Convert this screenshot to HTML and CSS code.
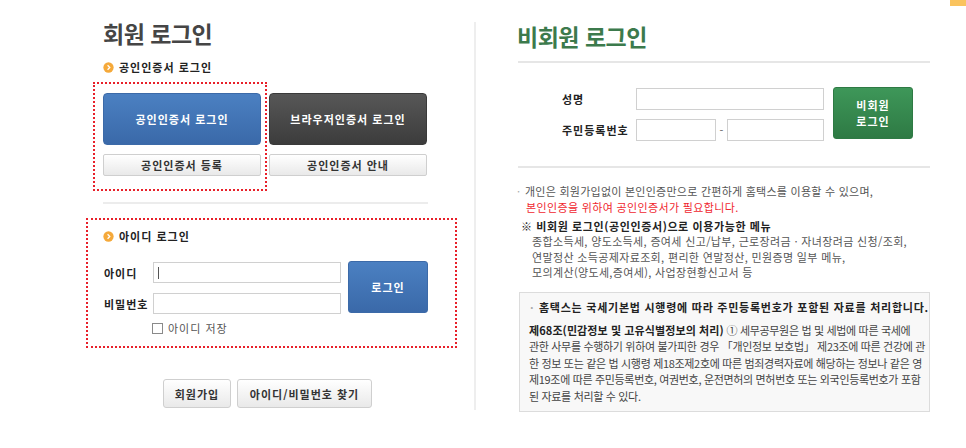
FILE: index.html
```html
<!DOCTYPE html>
<html lang="ko">
<head>
<meta charset="utf-8">
<title>로그인</title>
<link rel="stylesheet" href="styles.css">
</head>
<body>
<div class="corner"></div>
<div class="page">
  <section class="left">
    <h1 class="title">회원 로그인</h1>
    <h2 class="sub"><svg class="ico" viewBox="0 0 12 12" width="11" height="11"><circle cx="6" cy="6" r="5.6" fill="#f5a93a"/><path d="M5 3.6 L7.4 6 L5 8.4" stroke="#fff" stroke-width="1.4" fill="none"/></svg>공인인증서 로그인</h2>
    <div class="certRow">
      <div class="certBox">
        <button class="bigBtn blue">공인인증서 로그인</button>
        <button class="grayBtn">공인인증서 등록</button>
      </div>
      <div class="certCol">
        <button class="bigBtn dark">브라우저인증서 로그인</button>
        <button class="grayBtn">공인인증서 안내</button>
      </div>
    </div>
    <hr class="sep">
    <div class="idBox">
      <h2 class="sub sub2"><svg class="ico" viewBox="0 0 12 12" width="11" height="11"><circle cx="6" cy="6" r="5.6" fill="#f5a93a"/><path d="M5 3.6 L7.4 6 L5 8.4" stroke="#fff" stroke-width="1.4" fill="none"/></svg>아이디 로그인</h2>
      <div class="idForm">
        <div class="fields">
          <div class="frow"><label class="lbl">아이디</label><span class="inp wide"><i class="caret"></i></span></div>
          <div class="frow"><label class="lbl">비밀번호</label><span class="inp wide"></span></div>
        </div>
        <button class="loginBtn blue">로그인</button>
      </div>
      <div class="save"><span class="chk"></span>아이디 저장</div>
    </div>
    <div class="bottomBtns">
      <button class="grayBtn tall">회원가입</button>
      <button class="grayBtn tall">아이디/비밀번호 찾기</button>
    </div>
  </section>
  <div class="divider"></div>
  <section class="right">
    <h1 class="title green">비회원 로그인</h1>
    <hr class="rsep">
    <div class="nmForm">
      <div class="fields">
        <div class="frow r1"><label class="lbl rl">성명</label><span class="inp nm"></span></div>
        <div class="frow r2"><label class="lbl rl">주민등록번호</label><span class="inp j1"></span><span class="dash">-</span><span class="inp j2"></span></div>
      </div>
      <button class="loginBtn greenBtn">비회원<br>로그인</button>
    </div>
    <hr class="rsep rsep2">
    <div class="notes">
      <p class="note"><span class="dot">·</span>개인은 회원가입없이 본인인증만으로 간편하게 홈택스를 이용할 수 있으며,</p>
      <p class="note red">본인인증을 위하여 공인인증서가 필요합니다.</p>
      <p class="menuHead">※ 비회원 로그인(공인인증서)으로 이용가능한 메뉴</p>
      <p class="menu">종합소득세, 양도소득세, 증여세 신고/납부, 근로장려금 · 자녀장려금 신청/조회,</p>
      <p class="menu">연말정산 소득공제자료조회, 편리한 연말정산, 민원증명 일부 메뉴,</p>
      <p class="menu">모의계산(양도세,증여세), 사업장현황신고서 등</p>
    </div>
    <div class="lawBox">
      <p class="lawHead"><span class="dot">·</span>홈택스는 국세기본법 시행령에 따라 주민등록번호가 포함된 자료를 처리합니다.</p>
      <p class="law"><b>제68조(민감정보 및 고유식별정보의 처리)</b> ① 세무공무원은 법 및 세법에 따른 국세에<br>관한 사무를 수행하기 위하여 불가피한 경우 「개인정보 보호법」 제23조에 따른 건강에 관<br>한 정보 또는 같은 법 시행령 제18조제2호에 따른 범죄경력자료에 해당하는 정보나 같은 영<br>제19조에 따른 주민등록번호, 여권번호, 운전면허의 면허번호 또는 외국인등록번호가 포함<br>된 자료를 처리할 수 있다.</p>
    </div>
  </section>
</div>
</body>
</html>
```

FILE: styles.css
```css
* { box-sizing: border-box; }
html, body { margin: 0; padding: 0; background: #fff; }
body {
  font-family: "Noto Sans CJK KR", "Noto Sans", sans-serif;
  color: #333;
  font-size: 11px;
  width: 966px;
  height: 448px;
  overflow: hidden;
  position: relative;
}
p, h1, h2 { margin: 0; }
button { font-family: inherit; cursor: pointer; }

.corner {
  position: absolute;
  top: 0;
  right: 0;
  width: 16px;
  height: 6px;
  background: #fac35e;
}

.page {
  display: flex;
  padding-top: 17px;
}

/* LEFT */
.left {
  margin-left: 86px;
  width: 371px;
}
.title {
  font-size: 23px;
  font-weight: 700;
  color: #454545;
  line-height: 32px;
  margin-left: 17px;
  letter-spacing: -0.5px;
}
.title.green { color: #3c7a4c; margin-left: 0; }

.sub {
  display: flex;
  align-items: center;
  gap: 5px;
  font-size: 11px;
  font-weight: 700;
  color: #222;
  margin: 10px 0 0 17px;
  line-height: 16px;
  letter-spacing: 1px;
}
.ico { display: block; }

.certRow {
  display: flex;
  margin-top: 7px;
}
.certBox {
  border: 2px dotted #e8202a;
  width: 174px;
  height: 109px;
  padding: 9px 4px 0 8px;
  margin-left: 7px;
  display: flex;
  flex-direction: column;
  gap: 9px;
}
.certCol {
  margin-left: 2px;
  padding-top: 11px;
  display: flex;
  flex-direction: column;
  gap: 9px;
}
.bigBtn {
  width: 158px;
  height: 52px;
  border: 1px solid transparent;
  border-radius: 4px;
  color: #fff;
  font-size: 11px;
  font-weight: 700;
  letter-spacing: 1px;
  padding: 0;
}
.blue {
  background: linear-gradient(#4b80c2, #3a69a9);
  border-color: #3c6aa8;
}
.dark {
  background: linear-gradient(#575757, #3c3c3c);
  border-color: #3a3a3a;
}
.grayBtn {
  width: 158px;
  height: 22px;
  border: 1px solid #cfcfcf;
  border-radius: 2px;
  background: linear-gradient(#ffffff, #e9e9e9);
  color: #333;
  font-size: 11px;
  font-weight: 700;
  letter-spacing: 1px;
  padding: 0;
}

.sep {
  border: 0;
  border-top: 2px solid #ececec;
  width: 325px;
  margin: 11px 0 0 17px;
}

.idBox {
  border: 2px dotted #e8202a;
  margin-top: 14px;
  width: 371px;
  height: 130px;
  padding: 8px 0 0 0;
}
.sub2 { margin: 0 0 0 15px; }
.idForm {
  display: flex;
  margin-top: 18px;
  margin-left: 16px;
}
.fields { display: flex; flex-direction: column; gap: 10px; }
.frow { display: flex; align-items: center; height: 21px; }
.lbl {
  font-weight: 700;
  color: #222;
  font-size: 11px;
  letter-spacing: 1px;
  width: 49px;
}
.inp {
  display: block;
  height: 21px;
  border: 1px solid #d0d0d0;
  background: #fff;
  position: relative;
}
.wide { width: 188px; }
.caret {
  position: absolute;
  left: 4px;
  top: 4px;
  width: 1px;
  height: 12px;
  background: #555;
}
.loginBtn {
  width: 80px;
  height: 52px;
  margin-left: 7px;
  margin-top: -1px;
  border-radius: 3px;
  color: #fff;
  font-weight: 700;
  font-size: 11px;
  letter-spacing: 1px;
  padding: 0;
  border: 1px solid #3c6aa8;
}
.save {
  display: flex;
  align-items: center;
  gap: 5px;
  margin: 6px 0 0 64px;
  color: #555;
  font-size: 11px;
  letter-spacing: 1px;
}
.chk {
  width: 11px;
  height: 11px;
  border: 1px solid #8a8a8a;
  background: #fff;
}

.bottomBtns {
  display: flex;
  gap: 6px;
  margin: 31px 0 0 77px;
}
.tall { height: 29px; border-radius: 3px; }
.bottomBtns .tall:first-child { width: 68px; }
.bottomBtns .tall:last-child { width: 135px; }

.divider {
  width: 2px;
  height: 388px;
  background: #eeeeee;
  margin: 5px 0 0 17px;
}

/* RIGHT */
.right {
  margin-left: 41px;
  width: 413px;
}
.title.green { margin-top: 3px; }
.rsep {
  border: 0;
  border-top: 2px solid #e6e6e6;
  margin: 9px 0 0 1px;
  width: 412px;
}
.nmForm {
  display: flex;
  margin: 25px 0 0 45px;
}
.nmForm .fields { gap: 9px; }
.r1, .r2 { height: 22px; }
.rl { width: 74px; }
.nm { width: 188px; height: 22px; }
.j1 { width: 80px; height: 22px; }
.j2 { width: 97px; height: 22px; }
.dash { width: 11px; text-align: center; color: #666; }
.greenBtn {
  margin-left: 9px;
  width: 80px;
  height: 52px;
  background: linear-gradient(#3e9759, #2e7a44);
  border: 1px solid #2e7a44;
  line-height: 16px;
}
.rsep2 { margin-top: 25px; }

.notes { margin-top: 15px; }
.note {
  color: #555;
  font-size: 11px;
  line-height: 16px;
  padding-left: 9px;
  letter-spacing: 0.25px;
  white-space: nowrap;
}
.dot { display: inline-block; width: 8px; margin-left: -9px; color: #aaa; }
.note.red { color: #f0272f; letter-spacing: 0.35px; }
.menuHead {
  margin-top: 3px;
  font-weight: 700;
  color: #222;
  font-size: 11px;
  line-height: 16px;
  padding-left: 4px;
  letter-spacing: 0.6px;
  white-space: nowrap;
}
.menu {
  color: #555;
  line-height: 15.5px;
  padding-left: 15px;
  letter-spacing: 0.35px;
  white-space: nowrap;
}

.lawBox {
  margin: 11px 0 0 2px;
  width: 411px;
  height: 120px;
  border: 1px solid #dcdcdc;
  background: #f8f8f8;
  padding: 6px 8px 0 9px;
}
.lawHead {
  font-weight: 700;
  color: #222;
  line-height: 16px;
  padding-left: 5px;
  letter-spacing: 0.75px;
  white-space: nowrap;
}
.lawHead .dot { margin-left: -4px; width: 9px; }
.law {
  margin-top: 7px;
  color: #444;
  line-height: 16.6px;
  letter-spacing: -0.33px;
  white-space: nowrap;
}
.law b { color: #222; letter-spacing: 0.1px; }
```
